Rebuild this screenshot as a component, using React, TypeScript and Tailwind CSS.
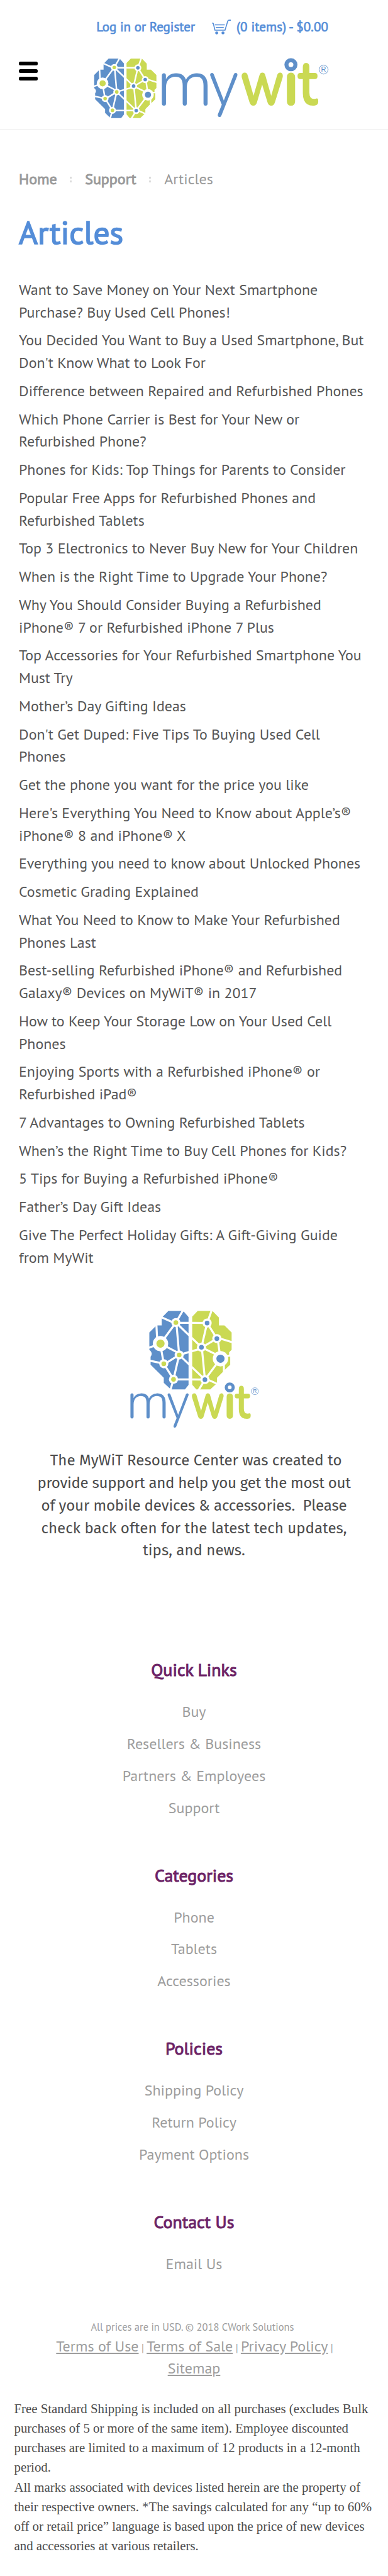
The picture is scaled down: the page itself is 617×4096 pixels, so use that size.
import React from "react";

const BLUE = "#5e8fc9";
const GREEN = "#cad953";

const ARTICLES: string[][] = [
  ["Want to Save Money on Your Next Smartphone", "Purchase? Buy Used Cell Phones!"],
  ["You Decided You Want to Buy a Used Smartphone, But", "Don't Know What to Look For"],
  ["Difference between Repaired and Refurbished Phones"],
  ["Which Phone Carrier is Best for Your New or", "Refurbished Phone?"],
  ["Phones for Kids: Top Things for Parents to Consider"],
  ["Popular Free Apps for Refurbished Phones and", "Refurbished Tablets"],
  ["Top 3 Electronics to Never Buy New for Your Children"],
  ["When is the Right Time to Upgrade Your Phone?"],
  ["Why You Should Consider Buying a Refurbished", "iPhone® 7 or Refurbished iPhone 7 Plus"],
  ["Top Accessories for Your Refurbished Smartphone You", "Must Try"],
  ["Mother’s Day Gifting Ideas"],
  ["Don't Get Duped: Five Tips To Buying Used Cell", "Phones"],
  ["Get the phone you want for the price you like"],
  ["Here's Everything You Need to Know about Apple’s®", "iPhone® 8 and iPhone® X"],
  ["Everything you need to know about Unlocked Phones"],
  ["Cosmetic Grading Explained"],
  ["What You Need to Know to Make Your Refurbished", "Phones Last"],
  ["Best-selling Refurbished iPhone® and Refurbished", "Galaxy® Devices on MyWiT® in 2017"],
  ["How to Keep Your Storage Low on Your Used Cell", "Phones"],
  ["Enjoying Sports with a Refurbished iPhone® or", "Refurbished iPad®"],
  ["7 Advantages to Owning Refurbished Tablets"],
  ["When’s the Right Time to Buy Cell Phones for Kids?"],
  ["5 Tips for Buying a Refurbished iPhone®"],
  ["Father’s Day Gift Ideas"],
  ["Give The Perfect Holiday Gifts: A Gift-Giving Guide", "from MyWit"],
];

const FOOTER = [
  { title: "Quick Links", links: ["Buy", "Resellers & Business", "Partners & Employees", "Support"] },
  { title: "Categories", links: ["Phone", "Tablets", "Accessories"] },
  { title: "Policies", links: ["Shipping Policy", "Return Policy", "Payment Options"] },
  { title: "Contact Us", links: ["Email Us"] },
];

const LEGAL = [
  "Free Standard Shipping is included on all purchases (excludes Bulk",
  "purchases of 5 or more of the same item). Employee discounted",
  "purchases are limited to a maximum of 12 products in a 12-month",
  "period.",
  "All marks associated with devices listed herein are the property of",
  "their respective owners. *The savings calculated for any “up to 60%",
  "off or retail price” language is based upon the price of new devices",
  "and accessories at various retailers.",
];

type Node = [x: number, y: number, r: number];
const LEFT_NODES: Node[] = [[395, 165, 15], [297, 299, 26], [416, 371, 15], [318, 427, 15], [380, 526, 15]];
const RIGHT_NODES: Node[] = [[594, 168, 15], [656, 267, 15], [558, 322, 15], [679, 395, 26], [580, 528, 15]];

function Brain() {
  return (
    <g>
      <path fill={BLUE} d="M347 91H436L447 97L476 130V562L453 591H363L318 548V516L234 433V382Q249 363 234 346L226 338V228L271 183H305V134Z" />
      <path fill={GREEN} d="M534 91H628L669 133V183H704L750 228V338L734 354V370H741V433L707 465L695 478L657 516V550L614 591H525L498 560V128Z" />
      <path
        stroke="#fff"
        strokeWidth="13"
        fill="none"
        d="M442 84L395 165M303 131L395 172M395 166L594 168M395 165L297 299M398 165L416 371M395 165L558 322M271 178L277 299M297 299L222 325M297 299L416 361M297 310L318 427M416 371L318 432M416 371L380 526M416 371L558 330M416 371L580 528M318 427L230 408M318 427L380 526M380 526L580 528M380 526L360 596M594 168L624 84M594 168L656 267M594 168L558 322M656 267L558 325M656 260L754 290M661 267L679 395M558 322L679 382M560 322L580 528M679 395L580 528M679 382L745 375M700 395L701 482M580 520L660 556M580 528L538 598"
      />
      <path fill="#fff" d="M476 85h22v512h-22z" />
      {LEFT_NODES.map(([x, y, r]) => (
        <g key={`${x}-${y}`}>
          <circle cx={x} cy={y} r={r === 26 ? 49 : 29} fill="#fff" />
          <circle cx={x} cy={y} r={r} fill={GREEN} />
        </g>
      ))}
      {RIGHT_NODES.map(([x, y, r]) => (
        <g key={`${x}-${y}`}>
          <circle cx={x} cy={y} r={r === 26 ? 49 : 29} fill="#fff" />
          <circle cx={x} cy={y} r={r} fill={BLUE} />
        </g>
      ))}
    </g>
  );
}

function Wordmark() {
  return (
    <g fontFamily="Nunito, Lato, sans-serif" fontSize="320">
      <g fill={BLUE} fontWeight="300">
        <text x="79" y="775" textLength="277" lengthAdjust="spacingAndGlyphs">m</text>
        <text x="334" y="775" textLength="150" lengthAdjust="spacingAndGlyphs">y</text>
      </g>
      <g fill={GREEN} fontWeight="700">
        <text x="489" y="775" textLength="217" lengthAdjust="spacingAndGlyphs">w</text>
        <text x="738" y="775" textAnchor="middle">i</text>
        <text x="772" y="775" textLength="98" lengthAdjust="spacingAndGlyphs">t</text>
      </g>
      <circle cx="738" cy="560" r="42" fill="#fff" />
      <circle cx="738" cy="578" r="22" fill="none" stroke={BLUE} strokeWidth="20" />
      <circle cx="898" cy="602" r="22" fill="none" stroke={BLUE} strokeWidth="3" />
      <text x="898" y="614" textAnchor="middle" fontSize="34" fontWeight="400" fill={BLUE} fontFamily="Liberation Sans, sans-serif">R</text>
    </g>
  );
}

function HeaderLogo() {
  return (
    <svg width="373" height="97" viewBox="0 0 373 97" role="img" className="overflow-visible">
      <g transform="translate(-42.9 -15.9) scale(0.1888)"><Brain /></g>
      <g transform="translate(73.1 -176.8) scale(0.3246)"><Wordmark /></g>
    </svg>
  );
}

function CenterLogo() {
  return (
    <svg width="207.3" height="189.8" viewBox="100 85 830 760" role="img" className="overflow-visible">
      <Brain />
      <Wordmark />
    </svg>
  );
}

function CartIcon() {
  return (
    <svg width="30" height="24" viewBox="0 0 30 24" fill="none" stroke="#548dd8" strokeWidth="1.6">
      <path d="M0.3 5.4L2.2 6.3L4.8 17H20.8L25.2 2.6Q25.7 1.2 27.2 1.1H30" />
      <path d="M4.8 8.5H20.4M6 12.6H18.8" strokeWidth="1.4" />
      <circle cx="7.6" cy="21.3" r="2.4" fill="#548dd8" stroke="none" />
      <circle cx="17.6" cy="21.3" r="2.4" fill="#548dd8" stroke="none" />
    </svg>
  );
}

function Separator() {
  return (
    <span className="flex w-[44.5px] flex-col items-center gap-[3px] pt-0.5">
      <i className="size-[3px] bg-[#dcdcdc]" />
      <i className="size-[3px] bg-[#dcdcdc]" />
    </span>
  );
}

export default function App() {
  return (
    <div className="h-[4096px] w-[617px] overflow-hidden bg-white font-['PT_Sans','Lato',sans-serif] text-[#555]">
      <header className="h-[207px] border-b border-[#e4e4e4] pt-[30px]">
        <div className="flex h-[26px] items-center pl-[153.2px] text-[21px] leading-[26px] whitespace-nowrap text-[#548dd8] [-webkit-text-stroke:0.7px]">
          <a>Log in or Register</a>
          <span className="ml-[27px] flex items-center gap-[9px]">
            <CartIcon />
            <a className="tracking-[0.15px]">(0 items) - $0.00</a>
          </span>
        </div>
        <div className="flex items-start pt-9">
          <button className="mt-[6px] ml-[30px] flex flex-col gap-[6px]" aria-label="Menu">
            <span className="h-[6px] w-[30px] rounded-[2.5px] bg-black" />
            <span className="h-[6px] w-[30px] rounded-[2.5px] bg-black" />
            <span className="h-[6px] w-[30px] rounded-[2.5px] bg-black" />
          </button>
          <div className="ml-[90px]"><HeaderLogo /></div>
        </div>
      </header>

      <main>
        <nav className="mt-[59.6px] ml-[30px] flex h-9 items-center text-[24px] leading-9 text-[#999]">
          <a className="[-webkit-text-stroke:0.9px]">Home</a>
          <Separator />
          <a className="[-webkit-text-stroke:0.9px]">Support</a>
          <Separator />
          <span>Articles</span>
        </nav>
        <h1 className="mt-[36.4px] ml-[30px] text-[51.4px] leading-[60px] text-[#548dd8] [-webkit-text-stroke:1.6px]">Articles</h1>

        <ul className="mt-11 ml-[30px] flex flex-col gap-[9.03px] text-[23.92px] leading-[35.73px] whitespace-nowrap">
          {ARTICLES.map((lines) => (
            <li key={lines[0]}>
              {lines.map((line) => <a key={line} className="block">{line}</a>)}
            </li>
          ))}
        </ul>

        <div className="mt-[66.2px] flex pl-[205.6px]"><CenterLogo /></div>

        <div className="mt-[30.9px] text-center font-['Fira_Sans','Open_Sans',sans-serif] text-[24.1px] leading-[35.8px] whitespace-nowrap text-[#4c4c4c]">
          <p>&nbsp;The MyWiT Resource Center was created to</p>
          <p className="tracking-[-0.3px]">provide support and help you get the most out</p>
          <p className="tracking-[-0.15px]">of your mobile devices &amp; accessories.&nbsp; Please</p>
          <p>check back often for the latest tech updates,</p>
          <p>tips, and news.</p>
        </div>
      </main>

      <footer className="text-center">
        <div className="mt-[154.2px] flex flex-col gap-[63.2px]">
          {FOOTER.map((section) => (
            <section key={section.title}>
              <h2 className="text-[27.9px] leading-9 text-[#6c2366] [-webkit-text-stroke:1px]">{section.title}</h2>
              <ul className="mt-6 text-[24px] leading-[50.8px] text-[#9d9d9d]">
                {section.links.map((link) => <li key={link}>{link}</li>)}
              </ul>
            </section>
          ))}
        </div>

        <p className="mt-[61px] pr-[5px] text-[16.5px] leading-[26px] text-[#9d9d9d]">All prices are in USD. © 2018 CWork Solutions</p>
        <div className="text-[16.4px] leading-[35px] whitespace-nowrap text-[#9d9d9d]">
          <p className="h-[35px] pl-[2px]">
            <a className="text-[24px] underline">Terms of Use</a> | <a className="text-[24px] underline">Terms of Sale</a> | <a className="text-[24px] underline">Privacy Policy</a> |
          </p>
          <p className="h-[35px]"><a className="text-[24px] underline">Sitemap</a></p>
        </div>

        <div className="mt-8 pl-[22.5px] text-left font-['Liberation_Serif',serif] text-[20.83px] leading-[31.24px] whitespace-nowrap text-[#4c4c4c]">
          {LEGAL.map((line) => <p key={line}>{line}</p>)}
        </div>
      </footer>
    </div>
  );
}
